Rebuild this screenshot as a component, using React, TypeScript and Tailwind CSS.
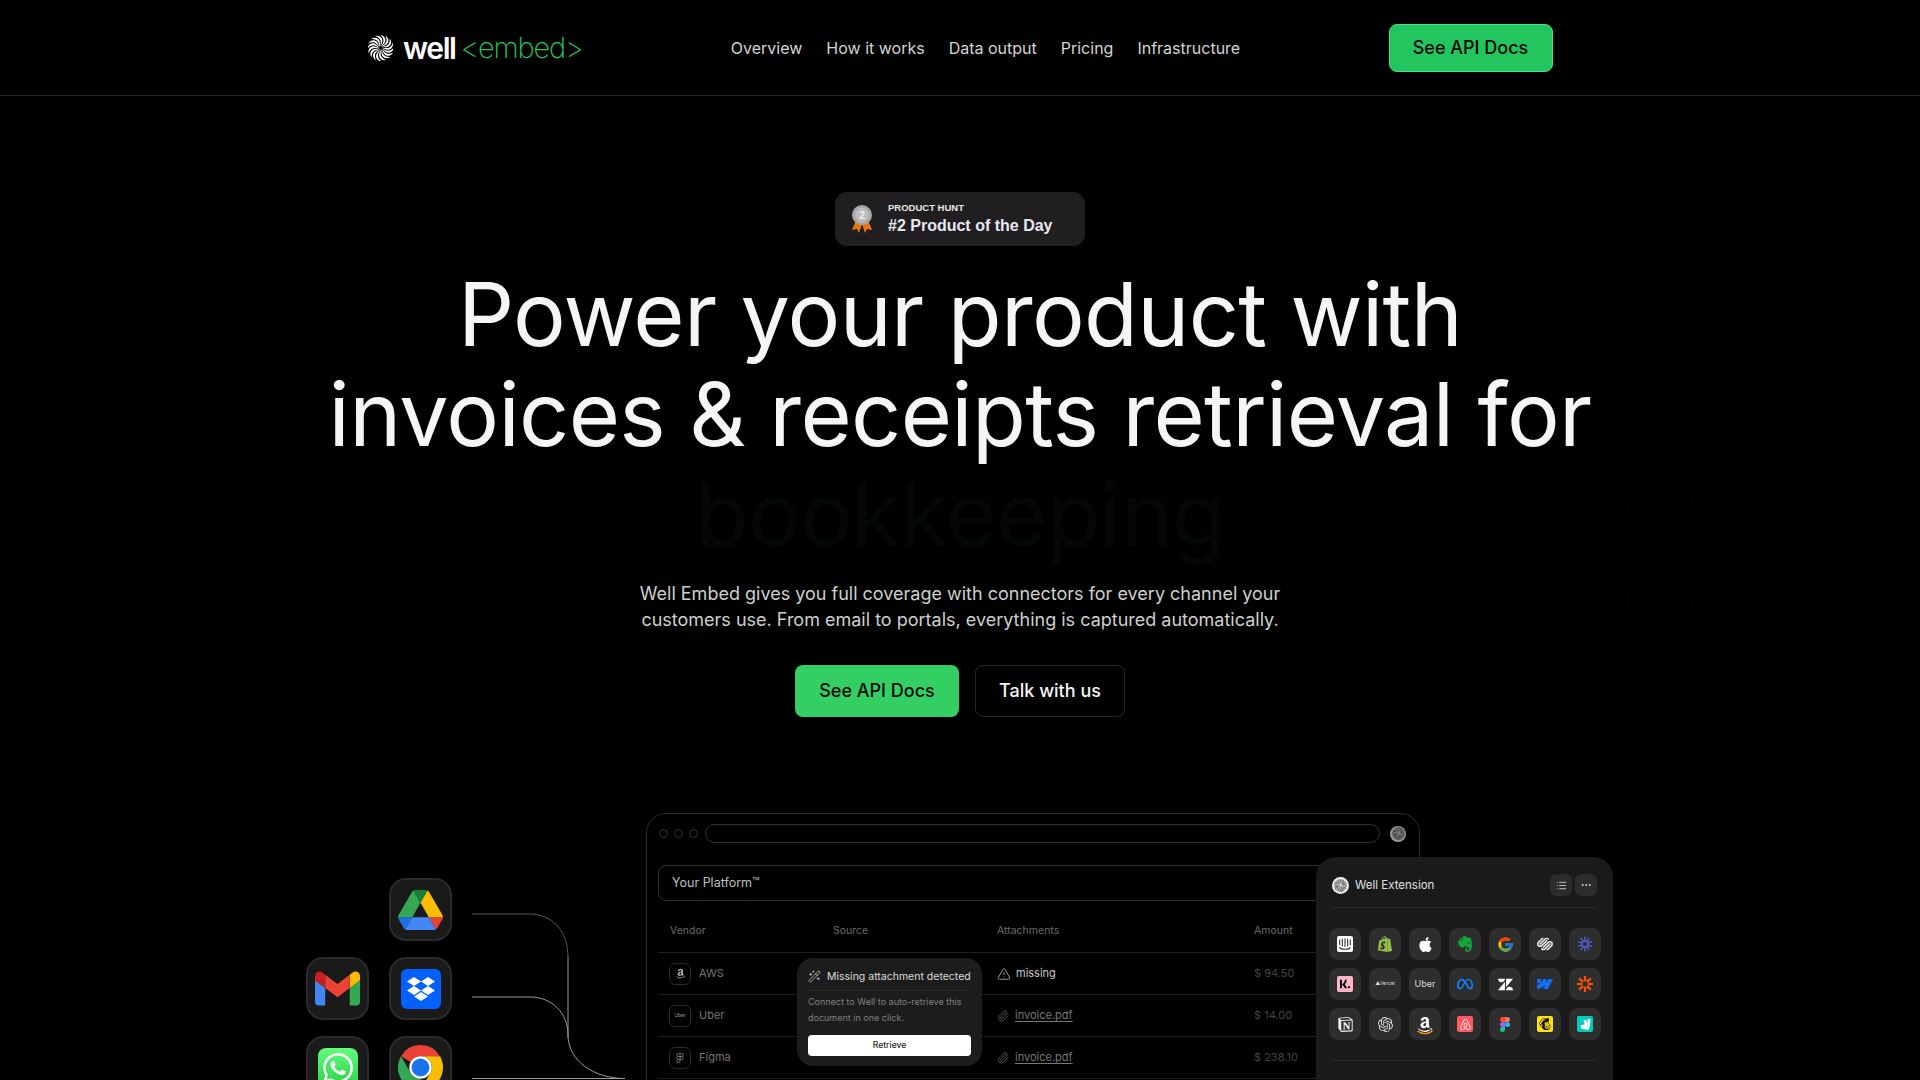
import React from 'react';
import { Ellipsis, List, Paperclip, TriangleAlert, WandSparkles } from 'lucide-react';
import { FaAmazon } from 'react-icons/fa';
import { FcGoogle } from 'react-icons/fc';
import {
    SiAirbnb, SiApple, SiDeliveroo, SiDropbox, SiEvernote, SiFigma, SiIntercom, SiKlarna, SiMailchimp,
    SiMeta, SiNotion, SiOpenai, SiShopify, SiSquarespace, SiWebflow, SiWhatsapp, SiZendesk,
} from 'react-icons/si';

const font = { fontFamily: 'Inter, sans-serif' };

function Swirl({ size = 30, color = '#fff' }: { size?: number; color?: string }) {
    return (
        <svg width={size} height={size} viewBox="-50 -50 100 100">
            {Array.from({ length: 16 }).map((_, i) => (
                <path
                    key={i}
                    d="M0 -6 C18 -12 30 -26 18 -49 C40 -34 32 -8 0 -6 Z"
                    fill={color}
                    transform={`rotate(${i * 22.5})`}
                />
            ))}
        </svg>
    );
}

function DriveIcon() {
    return (
        <svg width="45" height="40" viewBox="0 0 87.3 78">
            <path d="M6.6 66.85l3.85 6.65c.8 1.4 1.95 2.5 3.3 3.3L27.5 53H0c0 1.55.4 3.1 1.2 4.5z" fill="#1a73e8" />
            <path d="M43.65 25L29.9 1.2c-1.35.8-2.5 1.9-3.3 3.3L1.2 48.5C.4 49.9 0 51.45 0 53h27.5z" fill="#34a853" />
            <path d="M73.55 76.8c1.35-.8 2.5-1.9 3.3-3.3l1.6-2.75 7.65-13.25c.8-1.4 1.2-2.95 1.2-4.5H59.8l5.85 11.5z" fill="#ea4335" />
            <path d="M43.65 25L57.4 1.2C56.05.4 54.5 0 52.9 0H34.4c-1.6 0-3.15.45-4.5 1.2z" fill="#188038" />
            <path d="M59.8 53H27.5L13.75 76.8c1.35.8 2.9 1.2 4.5 1.2h50.8c1.6 0 3.15-.45 4.5-1.2z" fill="#4285f4" />
            <path d="M73.4 26.5L60.7 4.5c-.8-1.4-1.95-2.5-3.3-3.3L43.65 25 59.8 53h27.45c0-1.55-.4-3.1-1.2-4.5z" fill="#fbbc04" />
        </svg>
    );
}

function GmailIcon() {
    return (
        <svg width="45" height="45" viewBox="0 0 24 24">
            <path d="M1.636 21h3.819v-9.273L0 7.636v11.728C0 20.268.732 21 1.636 21z" fill="#4285f4" />
            <path d="M18.545 21h3.819c.904 0 1.636-.732 1.636-1.636V7.636l-5.455 4.091z" fill="#34a853" />
            <path d="M18.545 4.636v7.091L24 7.636V5.455c0-2.023-2.309-3.178-3.927-1.964z" fill="#fbbc04" />
            <path d="M5.455 11.727V4.636L12 9.545l6.545-4.909v7.091L12 16.636z" fill="#ea4335" />
            <path d="M0 5.455v2.181l5.455 4.091V4.636L3.927 3.491C2.309 2.277 0 3.432 0 5.455z" fill="#c5221f" />
        </svg>
    );
}

function ChromeIcon() {
    return (
        <svg width="45" height="45" viewBox="0 0 48 48">
            <path d="M3.2 12A24 24 0 0 1 44.78 12H24A12 12 0 0 0 13.6 18z" fill="#ea4335" />
            <path d="M44.78 12A24 24 0 0 1 24 48L34.4 30A12 12 0 0 0 24 12z" fill="#fbbc04" />
            <path d="M24 48A24 24 0 0 1 3.2 12L13.6 30A12 12 0 0 0 24 36z" fill="#34a853" />
            <circle cx="24" cy="24" r="12" fill="#fff" />
            <circle cx="24" cy="24" r="9.5" fill="#1a73e8" />
        </svg>
    );
}

function FigmaColor() {
    return (
        <svg width="10" height="15" viewBox="0 0 38 57">
            <path d="M19 28.5a9.5 9.5 0 1 1 19 0 9.5 9.5 0 0 1-19 0z" fill="#1abcfe" />
            <path d="M0 47.5A9.5 9.5 0 0 1 9.5 38H19v9.5a9.5 9.5 0 0 1-19 0z" fill="#0acf83" />
            <path d="M19 0v19h9.5a9.5 9.5 0 0 0 0-19z" fill="#ff7262" />
            <path d="M0 9.5A9.5 9.5 0 0 0 9.5 19H19V0H9.5A9.5 9.5 0 0 0 0 9.5z" fill="#f24e1e" />
            <path d="M0 28.5A9.5 9.5 0 0 0 9.5 38H19V19H9.5A9.5 9.5 0 0 0 0 28.5z" fill="#a259ff" />
        </svg>
    );
}

function Burst() {
    return (
        <svg width="16" height="16" viewBox="-12 -12 24 24" stroke="#5b5be8" strokeWidth="2">
            {Array.from({ length: 10 }).map((_, i) => (
                <line key={i} x1="0" y1="-5" x2="0" y2="-11" transform={`rotate(${i * 36})`} />
            ))}
            <circle r="4.5" fill="none" strokeWidth="2" />
        </svg>
    );
}

function ZapierBurst() {
    return (
        <svg width="16" height="16" viewBox="-12 -12 24 24" stroke="#ff4f00" strokeWidth="3.4">
            {Array.from({ length: 4 }).map((_, i) => (
                <line key={i} x1="0" y1="-12" x2="0" y2="12" transform={`rotate(${i * 45})`} />
            ))}
            <circle r="4" fill="#2e2e2e" stroke="none" />
        </svg>
    );
}

function AmazonColor() {
    return (
        <span className="relative flex h-4 w-4 items-center justify-center">
            <FaAmazon size={17} className="text-white" />
            <svg className="absolute -bottom-[3px] left-0" width="16" height="5" viewBox="0 0 16 5" fill="none">
                <path d="M0.5 1 C5 4.5 11 4.5 15.5 1" stroke="#f90" strokeWidth="1.4" />
            </svg>
        </span>
    );
}

const boxed = 'flex h-4 w-4 items-center justify-center rounded-[2px]';

const extensionIcons: React.ReactNode[] = [
    <SiIntercom size={16} className="text-white" />,
    <SiShopify size={16} className="text-[#95bf47]" />,
    <SiApple size={15} className="text-white" />,
    <SiEvernote size={16} className="text-[#14a53c]" />,
    <FcGoogle size={17} />,
    <SiSquarespace size={16} className="text-[#e8e8e8]" />,
    <Burst />,
    <span className={`${boxed} bg-[#ffb3c7] text-black`}><SiKlarna size={10} /></span>,
    <span className="text-[5px] text-[#ddd]">▲Vercel</span>,
    <span className="text-[9px] text-[#ddd]">Uber</span>,
    <SiMeta size={16} className="text-[#0a84ff]" />,
    <SiZendesk size={15} className="text-white" />,
    <SiWebflow size={16} className="text-[#146ef5]" />,
    <ZapierBurst />,
    <SiNotion size={15} className="text-[#eee]" />,
    <SiOpenai size={15} className="text-[#ddd]" />,
    <AmazonColor />,
    <span className={`${boxed} bg-[#ff5a5f] text-white`}><SiAirbnb size={11} /></span>,
    <FigmaColor />,
    <span className={`${boxed} bg-[#ffe01b] text-black`}><SiMailchimp size={12} /></span>,
    <span className={`${boxed} bg-[#00ccbc] text-white`}><SiDeliveroo size={11} /></span>,
];

const rows = [
    { vendor: 'AWS', logo: <FaAmazon size={11} className="text-[#aaa]" />, amount: '$ 94.50', missing: true },
    { vendor: 'Uber', logo: <span className="text-[5px] text-[#999]">Uber</span>, amount: '$ 14.00', missing: false },
    { vendor: 'Figma', logo: <SiFigma size={10} className="text-[#aaa]" />, amount: '$ 238.10', missing: false },
];

const tableCols = 'grid grid-cols-[163px_164px_257px_1fr] pl-3';

function Tile({ children }: { children: React.ReactNode }) {
    return (
        <div className="flex h-[63px] w-[63px] items-center justify-center rounded-[17px] border-2 border-[#2a2a2a] bg-[#1a1a1a]">
            {children}
        </div>
    );
}

export default function App() {
    return (
        <div className="relative h-screen overflow-hidden bg-black text-white" style={font}>
            {/* faint background arcs */}
            <svg className="pointer-events-none absolute inset-0" width="1920" height="1080" fill="none" stroke="#060606">
                <path d="M1630 620 C1612 480 1650 320 1800 165" />
                <path d="M1695 620 C1670 480 1720 320 1860 110" />
            </svg>

            {/* Nav */}
            <header className="relative h-[96px] border-b border-[#26262b]">
                <div className="mx-auto flex h-[95px] w-[1185px] items-center justify-between">
                    <div className="flex w-[215px] items-center">
                        <Swirl />
                        <span className="ml-[10px] text-[30px] font-semibold leading-none tracking-[-1.4px] text-white">well</span>
                        <span className="ml-[5px] text-[29px] font-extralight leading-none tracking-[-1.2px] text-[#22c55e]">&lt;embed&gt;</span>
                    </div>
                    <nav className="flex gap-6 text-base text-[#d4d4d4]">
                        <a>Overview</a>
                        <a>How it works</a>
                        <a>Data output</a>
                        <a>Pricing</a>
                        <a>Infrastructure</a>
                    </nav>
                    <button className="h-12 w-[164px] rounded-lg border border-[#4ade80] bg-[#22c55e] text-lg font-medium text-[#0a0a0a]">See API Docs</button>
                </div>
            </header>

            {/* Hero */}
            <section className="relative flex flex-col items-center pt-[96px]">
                <div className="flex h-[54px] w-[250px] items-center gap-[15px] rounded-xl bg-[#201e21] pl-4" style={{ fontFamily: '"Liberation Sans", sans-serif' }}>
                    <svg width="22" height="30" viewBox="0 0 22 30">
                        <path d="M5 16 L1 26 L6 25 L8 29 L11 20 L14 29 L16 25 L21 26 L17 16 Z" fill="#e8750f" />
                        <circle cx="11" cy="11" r="10" fill="#a8a8a8" />
                        <circle cx="11" cy="11" r="7" fill="#bdbdbd" />
                        <text x="11" y="15" textAnchor="middle" fontSize="11" fontWeight="700" fill="#eee">2</text>
                    </svg>
                    <div className="flex flex-col gap-[2px]">
                        <span className="text-[9.5px] font-bold leading-[12px] text-[#e5e5e5]">PRODUCT HUNT</span>
                        <span className="text-base font-bold leading-5 text-[#e8e8f0]">#2 Product of the Day</span>
                    </div>
                </div>
                <h1 className="mt-[18px] text-center text-[88px] font-normal leading-[100px] tracking-[-0.65px] text-[#f5f5f5]">
                    Power your product with<br />
                    invoices &amp; receipts retrieval for<br />
                    <span className="text-[#040804]">bookkeeping</span>
                </h1>
                <p className="mt-[17px] text-center text-lg leading-[26px] text-[#cfcfcf]">
                    Well Embed gives you full coverage with connectors for every channel your<br />
                    customers use. From email to portals, everything is captured automatically.
                </p>
                <div className="mt-8 flex gap-4">
                    <button className="h-[52px] w-[164px] rounded-lg bg-[#34cf62] text-lg font-medium text-[#0a0a0a]">See API Docs</button>
                    <button className="h-[52px] w-[150px] rounded-lg border border-[#27272a] bg-black text-lg font-medium text-[#f5f5f5]">Talk with us</button>
                </div>
            </section>

            {/* Product demo */}
            <section className="relative mt-[96px] flex pl-[306px]">
                <div className="grid w-[146px] grid-cols-2 content-start gap-x-5 gap-y-4 pt-[65px]">
                    <div />
                    <Tile><DriveIcon /></Tile>
                    <Tile><GmailIcon /></Tile>
                    <Tile>
                        <div className="flex h-10 w-10 items-center justify-center rounded-[6px] bg-[#0061ff]"><SiDropbox size={28} className="text-white" /></div>
                    </Tile>
                    <Tile>
                        <div className="flex h-10 w-10 items-center justify-center rounded-lg bg-gradient-to-b from-[#61fd7d] to-[#25cf43]"><SiWhatsapp size={30} className="text-white" /></div>
                    </Tile>
                    <Tile><ChromeIcon /></Tile>
                </div>

                <svg className="ml-5 shrink-0" width="153" height="267" viewBox="0 0 153 267" fill="none">
                    <path d="M0 101 H58 C80 101 96 118 96 144" stroke="#555" strokeWidth="1" />
                    <path d="M96 144 V225" stroke="#999" strokeWidth="1" />
                    <path d="M0 184 H58 C80 184 96 200 96 222 C96 248 122 265.5 153 265.5" stroke="#999" strokeWidth="1" />
                    <path d="M0 265.5 H153" stroke="#999" strokeWidth="1" />
                </svg>

                <div className="relative ml-[21px] h-[400px] w-[774px] shrink-0 rounded-[20px] border border-[#2a2a2a] px-[11px] pt-[10px]">
                    <div className="flex h-[19px] items-center">
                        <div className="flex w-[47px] gap-[6px] pl-[1px]">
                            <span className="h-[9px] w-[9px] rounded-full border border-[#333]" />
                            <span className="h-[9px] w-[9px] rounded-full border border-[#333]" />
                            <span className="h-[9px] w-[9px] rounded-full border border-[#333]" />
                        </div>
                        <div className="h-[19px] w-[675px] rounded-full border border-[#333]" />
                        <div className="ml-[10px] flex h-4 w-4 items-center justify-center rounded-full bg-[#999]">
                            <Swirl size={13} color="#333" />
                        </div>
                    </div>
                    <div className="mt-[22px] flex h-9 items-center rounded-lg border border-[#2e2e2e] pl-[13px] text-[12.5px] text-[#bdbdbd]">Your Platform™</div>
                    <div className={`${tableCols} mt-[20px] h-[31px] text-[10.5px] leading-[20px] text-[#6a6a6a]`}>
                        <span>Vendor</span>
                        <span>Source</span>
                        <span>Attachments</span>
                        <span>Amount</span>
                    </div>
                    {rows.map(row => (
                        <div key={row.vendor} className={`${tableCols} h-[42px] items-center border-t border-[#1f1f1f] text-[11px] text-[#757575]`}>
                            <span className="flex items-center gap-2">
                                <span className="-ml-[1px] flex h-[22px] w-[22px] items-center justify-center rounded-md border border-[#2a2a2a]">{row.logo}</span>
                                {row.vendor}
                            </span>
                            <span />
                            {row.missing ? (
                                <span className="flex items-center gap-[5px] text-[#c8c8c8]"><TriangleAlert size={14} strokeWidth={1.3} />missing</span>
                            ) : (
                                <span className="flex items-center gap-[6px] text-[#777]"><Paperclip size={12} strokeWidth={1.3} /><span className="underline underline-offset-2">invoice.pdf</span></span>
                            )}
                            <span className="text-[#444]">{row.amount}</span>
                        </div>
                    ))}
                    <div className="border-t border-[#1f1f1f]" />

                    {/* Missing attachment popover */}
                    <div className="absolute left-[150px] top-[144px] w-[185px] rounded-2xl bg-[#1c1c1c] px-[11px] pb-[10px] pt-[11px]">
                        <div className="flex items-center gap-[6px] whitespace-nowrap border-b border-[#2a2a2a] pb-[5px] text-[10.5px] text-[#dcdcdc]">
                            <WandSparkles size={13} strokeWidth={1.3} />
                            Missing attachment detected
                        </div>
                        <p className="mt-[3px] text-[9px] leading-[16px] text-[#808080]">Connect to Well to auto-retrieve this document in one click.</p>
                        <button className="mt-[9px] h-[21px] w-full rounded-[4px] bg-white text-[8.5px] font-medium text-[#222]">Retrieve</button>
                    </div>
                </div>

                {/* Extension panel */}
                <div className="absolute left-[1316px] top-[44px] h-[300px] w-[297px] rounded-[20px] bg-[#1a1a1a] px-[13px] pt-[17px]">
                    <div className="mx-[3px] flex items-center justify-between border-b border-[#2a2a2a] pb-[11px]">
                        <div className="flex items-center gap-[6px] pt-[1px] text-[11.5px] text-[#e0e0e0]">
                            <span className="flex h-[17px] w-[17px] items-center justify-center rounded-full bg-[#eee]"><Swirl size={13} color="#555" /></span>
                            Well Extension
                        </div>
                        <div className="flex gap-[3px]">
                            <span className="flex h-[22px] w-[22px] items-center justify-center rounded-md bg-[#2c2c2c]"><List size={11} className="text-[#ccc]" /></span>
                            <span className="flex h-[22px] w-[22px] items-center justify-center rounded-md bg-[#2c2c2c]"><Ellipsis size={12} className="text-[#ddd]" /></span>
                        </div>
                    </div>
                    <div className="mt-5 grid grid-cols-[repeat(7,32px)] gap-2">
                        {extensionIcons.map((icon, i) => (
                            <div key={i} className="flex h-8 w-8 items-center justify-center rounded-[9px] bg-[#2e2e2e]">{icon}</div>
                        ))}
                    </div>
                    <div className="mx-[3px] mt-5 border-t border-[#2a2a2a]" />
                </div>
            </section>
        </div>
    );
}
